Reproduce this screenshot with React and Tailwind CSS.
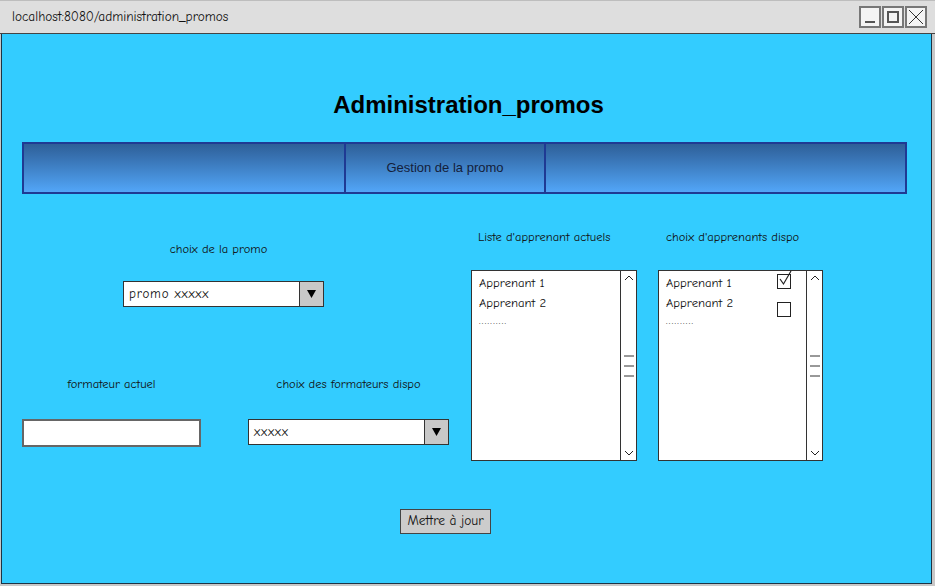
import React from 'react'

const hand = "font-['Comic_Sans_MS','Comic_Neue','DejaVu_Sans',sans-serif]"

function WinButton({ children }) {
  return (
    <div className="w-[22px] h-[22px] border-2 border-[#777] bg-[#f4f4f4] flex items-center justify-center">
      {children}
    </div>
  )
}

function Select({ value, width }) {
  return (
    <div className={`flex h-[26px] border border-[#333] bg-white ${width}`}>
      <div className={`flex-1 flex items-center pl-[5px] text-[13px] tracking-[0.8px] text-[#111] ${hand}`}>{value}</div>
      <div className="w-[24px] border-l border-[#333] bg-[#c8c8c8] flex items-center justify-center">
        <svg width="9" height="8" viewBox="0 0 9 8">
          <path d="M0 0 L9 0 L4.5 8 Z" fill="#000" />
        </svg>
      </div>
    </div>
  )
}

function Scrollbar() {
  return (
    <div className="w-[16px] border-l border-[#333] flex flex-col items-center justify-between py-[4px]">
      <svg width="10" height="6" viewBox="0 0 10 6">
        <path d="M1 5 L5 1 L9 5" stroke="#222" strokeWidth="1" fill="none" />
      </svg>
      <svg width="12" height="22" viewBox="0 0 12 22">
        <path d="M1 1 H11 M1 11 H11 M1 21 H11" stroke="#333" strokeWidth="1" />
      </svg>
      <svg width="10" height="6" viewBox="0 0 10 6">
        <path d="M1 1 L5 5 L9 1" stroke="#222" strokeWidth="1" fill="none" />
      </svg>
    </div>
  )
}

function Checkbox({ checked, className }) {
  return (
    <div className={`relative w-[14px] h-[15px] border border-[#222] bg-white ${className}`}>
      {checked && (
        <svg className="absolute -top-[5px] left-[1px] overflow-visible" width="14" height="16" viewBox="0 0 14 16">
          <path d="M1 9 L4.5 14 L12 1" stroke="#222" strokeWidth="1.2" fill="none" />
        </svg>
      )}
    </div>
  )
}

function ListBox({ width, withChecks }) {
  const items = ['Apprenant 1', 'Apprenant 2']
  return (
    <div className={`flex h-[191px] border border-[#333] bg-white ${width} ${hand}`}>
      <div className="flex-1 pt-[2px] pl-[7px] pr-[15px] text-[12.7px] text-[#111]">
        {items.map((it, i) => (
          <div key={it} className="flex h-[20px] items-start justify-between">
            <span className="leading-[20px]">{it}</span>
            {withChecks && <Checkbox checked={i === 0} className={i === 0 ? 'mt-[1px]' : 'mt-[9px]'} />}
          </div>
        ))}
        <div className="leading-[16px] text-[10px] tracking-[1.3px] text-[#111]">..........</div>
      </div>
      <Scrollbar />
    </div>
  )
}

export default function App() {
  return (
    <div className="w-[935px] h-[586px] bg-[#c8c8c8] flex flex-col overflow-hidden">
      {/* barre de titre */}
      <div className="h-[34px] shrink-0 bg-[#dedede] border-t border-[#bdbdbd] border-b border-b-[#444] flex items-center justify-between pl-[12px] pr-[8px]">
        <span className={`text-[13.3px] text-[#111] ${hand}`}>localhost:8080/administration_promos</span>
        <div className="flex gap-[1px] items-center">
          <WinButton>
            <svg width="14" height="14" viewBox="0 0 14 14">
              <path d="M2 12 H12" stroke="#555" strokeWidth="2" />
            </svg>
          </WinButton>
          <WinButton>
            <svg width="14" height="14" viewBox="0 0 14 14">
              <rect x="2" y="2" width="10" height="10" fill="none" stroke="#555" strokeWidth="2" />
            </svg>
          </WinButton>
          <WinButton>
            <svg width="16" height="16" viewBox="0 0 16 16">
              <path d="M1 1 L15 15 M15 1 L1 15" stroke="#333" strokeWidth="1" />
            </svg>
          </WinButton>
        </div>
      </div>

      {/* contenu */}
      <div className="ml-[1px] w-[931px] h-[550px] bg-[#33ccff] border-x border-b border-[#1d3344] px-[20px]">
        <h1 className="mt-[57px] h-[28px] leading-[28px] text-center text-[24px] font-bold text-black font-['Liberation_Sans',Arial,sans-serif] pl-[4px]">
          Administration_promos
        </h1>

        <nav className="mt-[23px] h-[52px] w-[885px] border-2 border-[#1f3a93] bg-gradient-to-b from-[#2e5f98] to-[#52a6f8] flex">
          <div className="w-[322px] border-r-2 border-[#1f3a93]" />
          <div className="w-[200px] border-r-2 border-[#1f3a93] flex items-center justify-center text-[13px] text-[#14203a] font-['Liberation_Sans',Arial,sans-serif]">
            Gestion de la promo
          </div>
          <div className="flex-1" />
        </nav>

        <div className={`flex items-start ${hand} text-[12.5px] text-[#111]`}>
          {/* partie gauche */}
          <div className="w-[427px] pt-[47px]">
            <div className="ml-[101px] w-[201px] flex flex-col items-center">
              <div className="h-[16px] leading-[16px] pr-[10px]">choix de la promo</div>
              <div className="mt-[24px]">
                <Select value="promo xxxxx" width="w-[201px]" />
              </div>
            </div>
            <div className="mt-[69px] flex gap-[47px]">
              <div className="w-[179px] flex flex-col items-center">
                <div className="h-[16px] leading-[16px]">formateur actuel</div>
                <div className="mt-[27px] w-[179px] h-[28px] border-2 border-[#666] bg-white" />
              </div>
              <div className="w-[201px] flex flex-col items-center">
                <div className="h-[16px] leading-[16px]">choix des formateurs dispo</div>
                <div className="mt-[27px]">
                  <Select value="xxxxx" width="w-[201px]" />
                </div>
              </div>
            </div>
          </div>

          {/* partie droite */}
          <div className="ml-[22px] pt-[35px] flex gap-[21px]">
            <div>
              <div className="h-[16px] leading-[16px] pl-[7px]">Liste d'apprenant actuels</div>
              <div className="mt-[25px]">
                <ListBox width="w-[166px]" />
              </div>
            </div>
            <div>
              <div className="h-[16px] leading-[16px] pl-[8px]">choix d'apprenants dispo</div>
              <div className="mt-[25px]">
                <ListBox width="w-[165px]" withChecks />
              </div>
            </div>
          </div>
        </div>

        <div className="mt-[46px] ml-[378px]">
          <button className={`w-[91px] h-[25px] bg-[#cccccc] border border-[#444] text-[13.5px] text-[#111] ${hand}`}>
            Mettre à jour
          </button>
        </div>
      </div>
    </div>
  )
}
